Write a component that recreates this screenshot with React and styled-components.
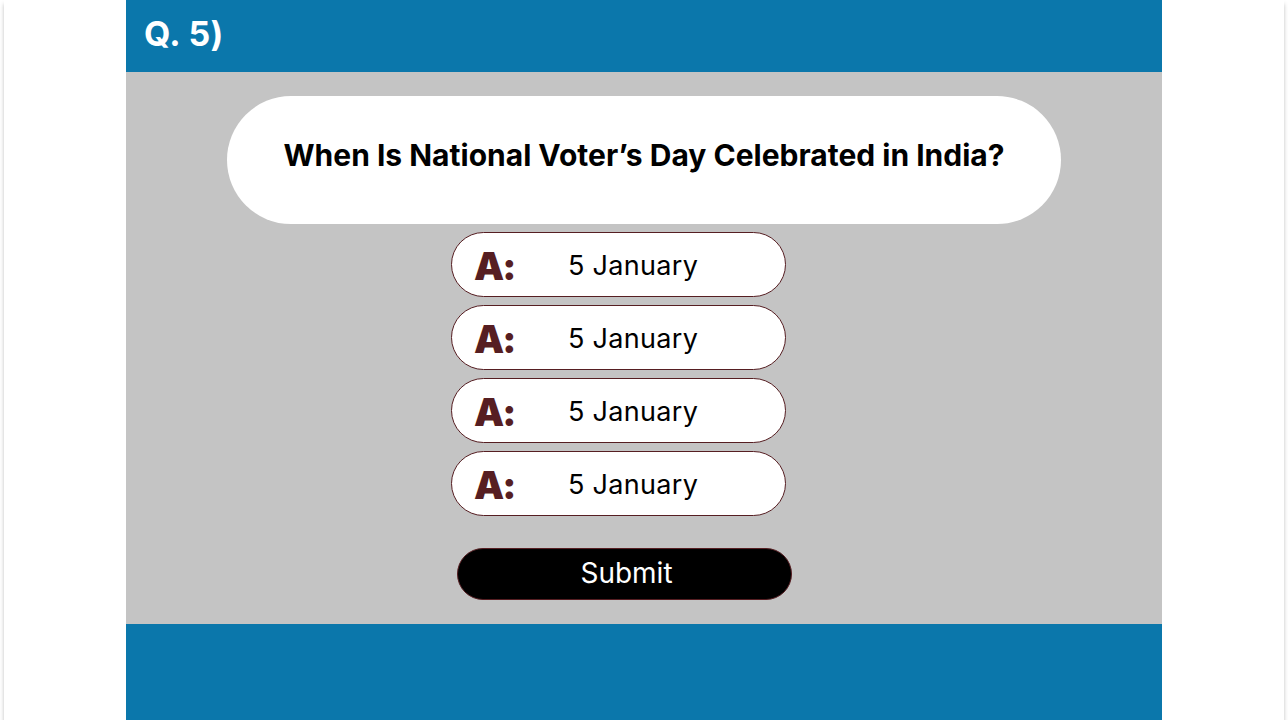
import React from "react";
import styled, { createGlobalStyle } from "styled-components";

const GlobalStyle = createGlobalStyle`
  html, body {
    margin: 0;
    padding: 0;
    background: #ffffff;
  }
  body {
    font-family: Inter, "Noto Sans", sans-serif;
  }
`;

const Frame = styled.div`
  width: 1280px;
  height: 720px;
  margin: 0 auto;
  background: #ffffff;
  box-shadow: 0 4px 4px rgba(0, 0, 0, 0.25);
  display: flex;
  justify-content: center;
`;

const Column = styled.div`
  width: 1036px;
  display: flex;
  flex-direction: column;
`;

const Header = styled.header`
  height: 72px;
  background: #0b77ab;
  display: flex;
  align-items: center;
  padding-left: 18px;
  box-sizing: border-box;
`;

const QNumber = styled.h1`
  margin: 0;
  color: #ffffff;
  font-size: 34px;
  font-weight: 700;
  letter-spacing: 0.4px;
  line-height: 1;
  padding-bottom: 4px;
`;

const Body = styled.main`
  height: 552px;
  background: #c4c4c4;
  padding-top: 24px;
  box-sizing: border-box;
  display: flex;
  flex-direction: column;
`;

const QuestionCard = styled.div`
  width: 834px;
  height: 128px;
  margin: 0 auto;
  background: #ffffff;
  border-radius: 64px;
  display: flex;
  justify-content: center;
  padding-top: 41px;
  box-sizing: border-box;
`;

const QuestionText = styled.h2`
  margin: 0;
  font-size: 30px;
  font-weight: 700;
  color: #000000;
  line-height: 36px;
`;

const Options = styled.div`
  display: flex;
  flex-direction: column;
  gap: 8px;
  margin-top: 8px;
  padding-left: 325px;
`;

const Option = styled.button`
  width: 335px;
  height: 65px;
  box-sizing: border-box;
  border: 1px solid #561e22;
  border-radius: 33px;
  background: #ffffff;
  display: flex;
  align-items: center;
  padding: 2px 0 0 22px;
  cursor: pointer;
  font-family: inherit;
`;

const Letter = styled.span`
  width: 94px;
  text-align: left;
  color: #561e22;
  font-size: 38px;
  font-weight: 900;
  letter-spacing: -2px;
  line-height: 1;
`;

const Answer = styled.span`
  color: #000000;
  font-size: 27px;
  font-weight: 400;
  letter-spacing: 0.3px;
`;

const Submit = styled.button`
  width: 335px;
  height: 52px;
  margin-top: 32px;
  margin-left: 331px;
  box-sizing: border-box;
  background: #000000;
  border: 1px solid #561e22;
  border-radius: 26px;
  color: #ffffff;
  font-family: inherit;
  font-size: 28px;
  font-weight: 400;
  cursor: pointer;
  padding: 0 0 2px 4px;
`;

const Footer = styled.footer`
  height: 96px;
  background: #0b77ab;
`;

const answers = ["5 January", "5 January", "5 January", "5 January"];

function App() {
  return (
    <>
      <GlobalStyle />
      <Frame>
        <Column>
          <Header>
            <QNumber>Q. 5)</QNumber>
          </Header>
          <Body>
            <QuestionCard>
              <QuestionText>When Is National Voter’s Day Celebrated in India?</QuestionText>
            </QuestionCard>
            <Options>
              {answers.map((a, i) => (
                <Option key={i}>
                  <Letter>A:</Letter>
                  <Answer>{a}</Answer>
                </Option>
              ))}
            </Options>
            <Submit>Submit</Submit>
          </Body>
          <Footer />
        </Column>
      </Frame>
    </>
  );
}

export default App;
